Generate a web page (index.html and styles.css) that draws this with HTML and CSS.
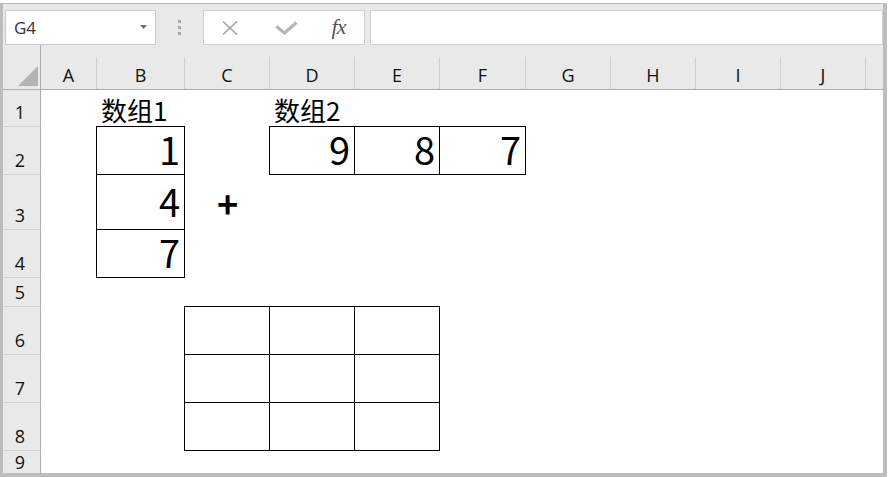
FILE: index.html
```html
<!DOCTYPE html>
<html lang="zh-CN">
<head>
<meta charset="utf-8">
<title>Sheet</title>
<link rel="stylesheet" href="styles.css">
</head>
<body>
<div class="win">
  <div class="fbar">
    <div class="namebox">
      <span class="ref">G4</span>
      <svg class="dd" width="7" height="4" viewBox="0 0 7 4"><path d="M0 0H7L3.5 4Z" fill="#6e6e6e"/></svg>
    </div>
    <div class="grip"><i></i><i></i><i></i></div>
    <div class="fbtns">
      <span class="fb"><svg width="16" height="14" viewBox="0 0 16 14"><path d="M1 0.5L15 13.5M15 0.5L1 13.5" stroke="#a3a3a3" stroke-width="1.6" fill="none"/></svg></span>
      <span class="fb"><svg width="23" height="14" viewBox="0 0 23 14"><path d="M1.5 5.5L9.5 12L21.5 1.5" stroke="#b5b5b5" stroke-width="3.2" fill="none"/></svg></span>
      <span class="fb fx">fx</span>
    </div>
    <div class="finput"></div>
  </div>
  <div class="sheet">
    <!-- header -->
    <div class="corner"><svg width="20" height="20" viewBox="0 0 20 20"><path d="M0 20H20V0Z" fill="#b4b4b4"/></svg></div>
    <div class="ch"><span>A</span></div>
    <div class="ch"><span>B</span></div>
    <div class="ch"><span>C</span></div>
    <div class="ch"><span>D</span></div>
    <div class="ch"><span>E</span></div>
    <div class="ch"><span>F</span></div>
    <div class="ch"><span>G</span></div>
    <div class="ch"><span>H</span></div>
    <div class="ch"><span>I</span></div>
    <div class="ch"><span>J</span></div>
    <div class="ch"><span class="blank"></span></div>
    <!-- row 1 -->
    <div class="rh">1</div>
    <div class="c"></div>
    <div class="c lbl">数组1</div>
    <div class="c"></div>
    <div class="c lbl">数组2</div>
    <div class="c"></div><div class="c"></div><div class="c"></div><div class="c"></div><div class="c"></div><div class="c"></div><div class="c"></div>
    <!-- row 2 -->
    <div class="rh">2</div>
    <div class="c"></div>
    <div class="c num bx">1</div>
    <div class="c"></div>
    <div class="c num bx">9</div>
    <div class="c num bx">8</div>
    <div class="c num bx">7</div>
    <div class="c"></div><div class="c"></div><div class="c"></div><div class="c"></div><div class="c"></div>
    <!-- row 3 -->
    <div class="rh">3</div>
    <div class="c"></div>
    <div class="c num bx">4</div>
    <div class="c op">+</div>
    <div class="c"></div><div class="c"></div><div class="c"></div><div class="c"></div><div class="c"></div><div class="c"></div><div class="c"></div><div class="c"></div>
    <!-- row 4 -->
    <div class="rh">4</div>
    <div class="c"></div>
    <div class="c num bx">7</div>
    <div class="c"></div><div class="c"></div><div class="c"></div><div class="c"></div><div class="c"></div><div class="c"></div><div class="c"></div><div class="c"></div><div class="c"></div>
    <!-- row 5 -->
    <div class="rh">5</div>
    <div class="c"></div><div class="c"></div><div class="c"></div><div class="c"></div><div class="c"></div><div class="c"></div><div class="c"></div><div class="c"></div><div class="c"></div><div class="c"></div><div class="c"></div>
    <!-- row 6 -->
    <div class="rh">6</div>
    <div class="c"></div><div class="c"></div>
    <div class="c bx"></div><div class="c bx"></div><div class="c bx"></div>
    <div class="c"></div><div class="c"></div><div class="c"></div><div class="c"></div><div class="c"></div><div class="c"></div>
    <!-- row 7 -->
    <div class="rh">7</div>
    <div class="c"></div><div class="c"></div>
    <div class="c bx"></div><div class="c bx"></div><div class="c bx"></div>
    <div class="c"></div><div class="c"></div><div class="c"></div><div class="c"></div><div class="c"></div><div class="c"></div>
    <!-- row 8 -->
    <div class="rh">8</div>
    <div class="c"></div><div class="c"></div>
    <div class="c bx"></div><div class="c bx"></div><div class="c bx"></div>
    <div class="c"></div><div class="c"></div><div class="c"></div><div class="c"></div><div class="c"></div><div class="c"></div>
    <!-- row 9 -->
    <div class="rh last">9</div>
    <div class="c"></div><div class="c"></div><div class="c"></div><div class="c"></div><div class="c"></div><div class="c"></div><div class="c"></div><div class="c"></div><div class="c"></div><div class="c"></div><div class="c"></div>
  </div>
</div>
</body>
</html>
```

FILE: styles.css
```css
* { box-sizing: border-box; }
html, body { margin: 0; padding: 0; background: #fff; }
body { padding-top: 3px; }

.win {
  width: 887px;
  height: 474px;
  border-style: solid;
  border-color: #bdbdbd;
  border-width: 1px 4px 4px 3px;
  background: #fff;
  display: flex;
  flex-direction: column;
  overflow: hidden;
}

/* formula bar */
.fbar {
  height: 41px;
  flex: none;
  background: #e9e9e9;
  display: flex;
  align-items: flex-start;
  padding: 6px 0 0 2px;
}
.namebox {
  width: 151px;
  height: 35px;
  background: #fff;
  border: 1px solid #cacaca;
  display: flex;
  align-items: center;
  padding: 0 8px 0 8px;
  font-family: "Open Sans", sans-serif;
  font-size: 17px;
  color: #333;
}
.ref { flex: 1; }
.dd { margin-top: -1px; }
.grip {
  width: 47px;
  height: 35px;
  display: flex;
  flex-direction: column;
  align-items: center;
  justify-content: center;
  gap: 3px;
}
.grip i {
  display: block;
  width: 3px;
  height: 3px;
  background: #a8a8a8;
}
.fbtns {
  width: 162px;
  height: 35px;
  background: #fff;
  border: 1px solid #d0d0d0;
  display: grid;
  grid-template-columns: 52px 61px 43px;
  align-items: center;
}
.fb {
  display: flex;
  justify-content: center;
  align-items: center;
}
.fx {
  font-family: "Liberation Serif", serif;
  font-style: italic;
  font-size: 22px;
  color: #555;
  letter-spacing: -1px;
  padding-bottom: 2px;
}
.finput {
  flex: 1;
  margin-left: 5px;
  height: 35px;
  background: #fff;
  border: 1px solid #d0d0d0;
}

/* sheet grid */
.sheet {
  flex: 1;
  display: grid;
  grid-template-columns: 38px 56px 88px 85px 85px 85px 86px 85px 85px 85px 85px 1fr;
  grid-template-rows: 45px 37px 48px 55px 48px 29px 48px 48px 48px 1fr;
  overflow: hidden;
}
.corner {
  background: #e9e9e9;
  border-right: 1px solid #ababab;
  border-bottom: 1px solid #ababab;
  display: flex;
  justify-content: flex-end;
  align-items: flex-end;
  padding: 0 2px 3px 0;
}
.ch {
  background: #e9e9e9;
  border-bottom: 1px solid #ababab;
  display: flex;
  align-items: flex-end;
}
.ch span {
  flex: 1;
  height: 32px;
  border-right: 1px solid #cfcfcf;
  display: flex;
  justify-content: center;
  align-items: flex-end;
  padding-bottom: 5px;
  font-family: "Open Sans", sans-serif;
  font-size: 18px;
  line-height: 1;
  color: #111;
}
.ch span.blank { border-right: none; }
.rh {
  background: #e9e9e9;
  border-right: 1px solid #ababab;
  border-bottom: 1px solid #d3d3d3;
  display: flex;
  justify-content: center;
  align-items: flex-end;
  padding: 0 3px 5px 0;
  font-family: "Open Sans", sans-serif;
  font-size: 18px;
  line-height: 1;
  color: #111;
}
.rh.last {
  border-bottom: none;
  padding-bottom: 2px;
}

.c {
  display: flex;
  align-items: center;
  font-family: "Noto Sans CJK SC", "Noto Sans", sans-serif;
  color: #000;
  line-height: 1;
  min-width: 0;
}
.lbl {
  font-size: 26px;
  align-items: flex-end;
  padding: 0 0 4px 4px;
  white-space: nowrap;
}
.num {
  font-size: 38px;
  justify-content: flex-end;
  padding: 0 4px 3px 0;
}
.op {
  font-size: 36px;
  font-weight: 700;
  justify-content: center;
  padding-bottom: 2px;
}
.bx {
  border: 1px solid #000;
  margin: -1px 0 0 -1px;
}
```
